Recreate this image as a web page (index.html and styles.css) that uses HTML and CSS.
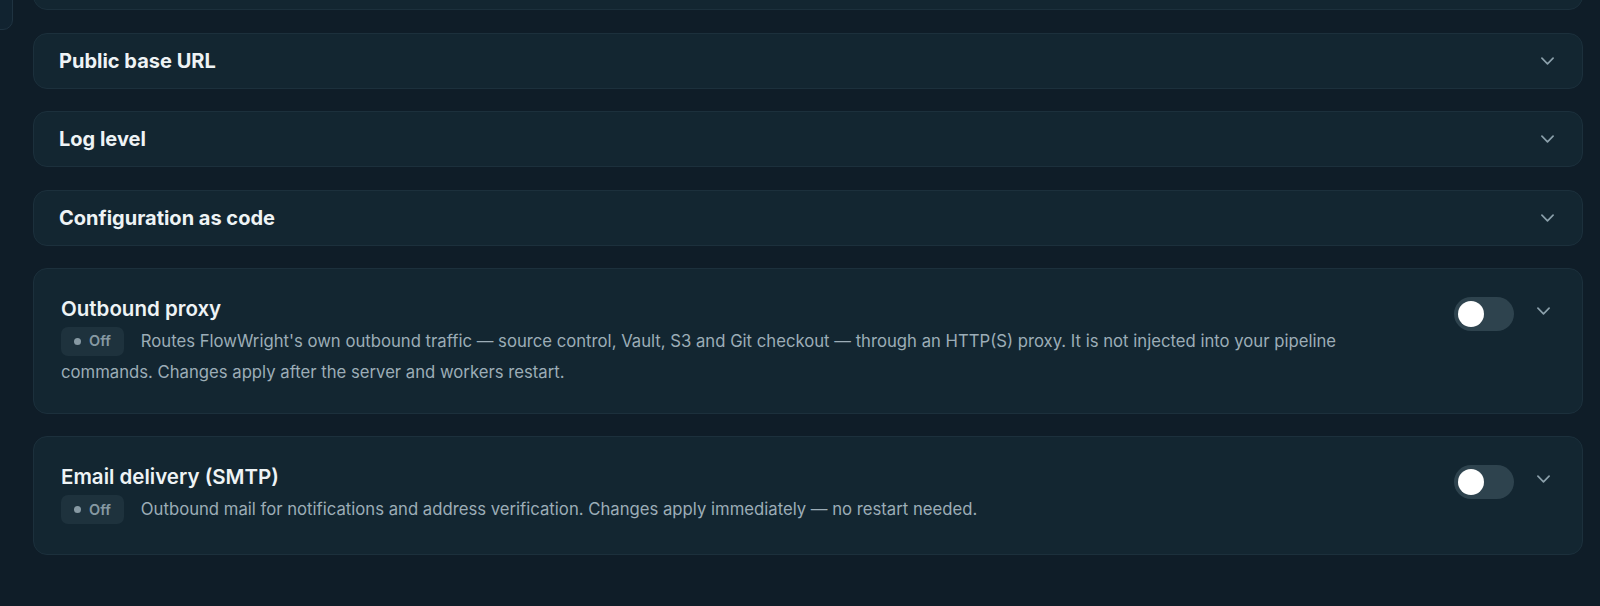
FILE: index.html
```html
<!DOCTYPE html>
<html lang="en">
<head>
  <meta charset="UTF-8" />
  <meta name="viewport" content="width=device-width, initial-scale=1.0" />
  <title>Server settings</title>
  <link rel="stylesheet" href="styles.css">
</head>
<body>
  <div class="rail-tab"></div>

  <main class="settings">
    <section class="panel">
      <h2>Server address</h2>
      <svg class="chevron" viewBox="0 0 14 8"><path d="M1 1l6 6 6-6" /></svg>
    </section>

    <section class="panel">
      <h2>Public base URL</h2>
      <svg class="chevron" viewBox="0 0 14 8"><path d="M1 1l6 6 6-6" /></svg>
    </section>

    <section class="panel">
      <h2>Log level</h2>
      <svg class="chevron" viewBox="0 0 14 8"><path d="M1 1l6 6 6-6" /></svg>
    </section>

    <section class="panel">
      <h2>Configuration as code</h2>
      <svg class="chevron" viewBox="0 0 14 8"><path d="M1 1l6 6 6-6" /></svg>
    </section>

    <section class="panel panel-switch">
      <div class="panel-body">
        <h3>Outbound proxy</h3>
        <p class="desc">
          <span class="status"><span class="dot"></span>Off</span>Routes FlowWright's own outbound traffic — source control, Vault, S3 and Git checkout — through an HTTP(S) proxy. It is not injected into your pipeline commands. Changes apply after the server and workers restart.
        </p>
      </div>
      <div class="controls">
        <span class="toggle"><span class="knob"></span></span>
        <svg class="chevron" viewBox="0 0 14 8"><path d="M1 1l6 6 6-6" /></svg>
      </div>
    </section>

    <section class="panel panel-switch panel-short">
      <div class="panel-body">
        <h3>Email delivery (SMTP)</h3>
        <p class="desc">
          <span class="status"><span class="dot"></span>Off</span>Outbound mail for notifications and address verification. Changes apply immediately — no restart needed.
        </p>
      </div>
      <div class="controls">
        <span class="toggle"><span class="knob"></span></span>
        <svg class="chevron" viewBox="0 0 14 8"><path d="M1 1l6 6 6-6" /></svg>
      </div>
    </section>
  </main>
</body>
</html>
```

FILE: styles.css
```css
body {
  font-family: 'Inter', 'Liberation Sans', sans-serif;
  margin: 0;
  padding: 0;
  background-color: #0f1d28;
  color: #eef3f5;
  overflow: hidden;
}

.rail-tab {
  position: absolute;
  top: -30px;
  left: -20px;
  width: 31px;
  height: 58px;
  border: 1px solid #1f3341;
  border-radius: 10px;
  background-color: #112330;
}

.settings {
  display: flex;
  flex-direction: column;
  gap: 22.5px;
  margin-top: -46px;
  padding: 0 17px 40px 33px;
}

.panel {
  display: flex;
  align-items: center;
  justify-content: space-between;
  height: 56px;
  box-sizing: border-box;
  padding: 0 28px 0 25px;
  background-color: #132631;
  border: 1px solid #1c303c;
  border-radius: 14px;
}

.panel h2 {
  margin: 0;
  font-size: 20px;
  font-weight: 700;
}

.chevron {
  width: 13px;
  height: 8px;
  fill: none;
  stroke: #8ba0ab;
  stroke-width: 1.8;
  stroke-linecap: round;
  stroke-linejoin: round;
}

.panel-switch {
  align-items: flex-start;
  height: auto;
  padding: 27px 32px 26px 27px;
}

.panel-short {
  padding-bottom: 29px;
}

.panel-body {
  flex: 1;
  max-width: 1340px;
}

.panel-switch h3 {
  margin: 0;
  font-size: 20.5px;
  line-height: 26px;
  font-weight: 600;
}

.desc {
  margin: 4px 0 0;
  font-size: 16.7px;
  line-height: 30px;
  color: #9cadb7;
}

.status {
  display: inline-flex;
  align-items: center;
  gap: 8px;
  height: 29px;
  padding: 0 13px 0 13px;
  margin-right: 17px;
  vertical-align: middle;
  position: relative;
  top: -1px;
  border-radius: 7px;
  background-color: #1e323d;
  color: #8799a3;
  font-size: 14.5px;
  font-weight: 600;
  line-height: 1;
}

.dot {
  width: 7px;
  height: 7px;
  border-radius: 50%;
  background-color: #8799a3;
}

.controls {
  display: flex;
  align-items: center;
  gap: 23px;
  margin-top: 1px;
}

.controls .chevron {
  margin-top: -6px;
}

.toggle {
  display: flex;
  align-items: center;
  width: 60px;
  height: 34px;
  box-sizing: border-box;
  padding: 0 4px;
  border-radius: 17px;
  background-color: #2e434e;
}

.knob {
  width: 26px;
  height: 26px;
  border-radius: 50%;
  background-color: #ffffff;
}
```
